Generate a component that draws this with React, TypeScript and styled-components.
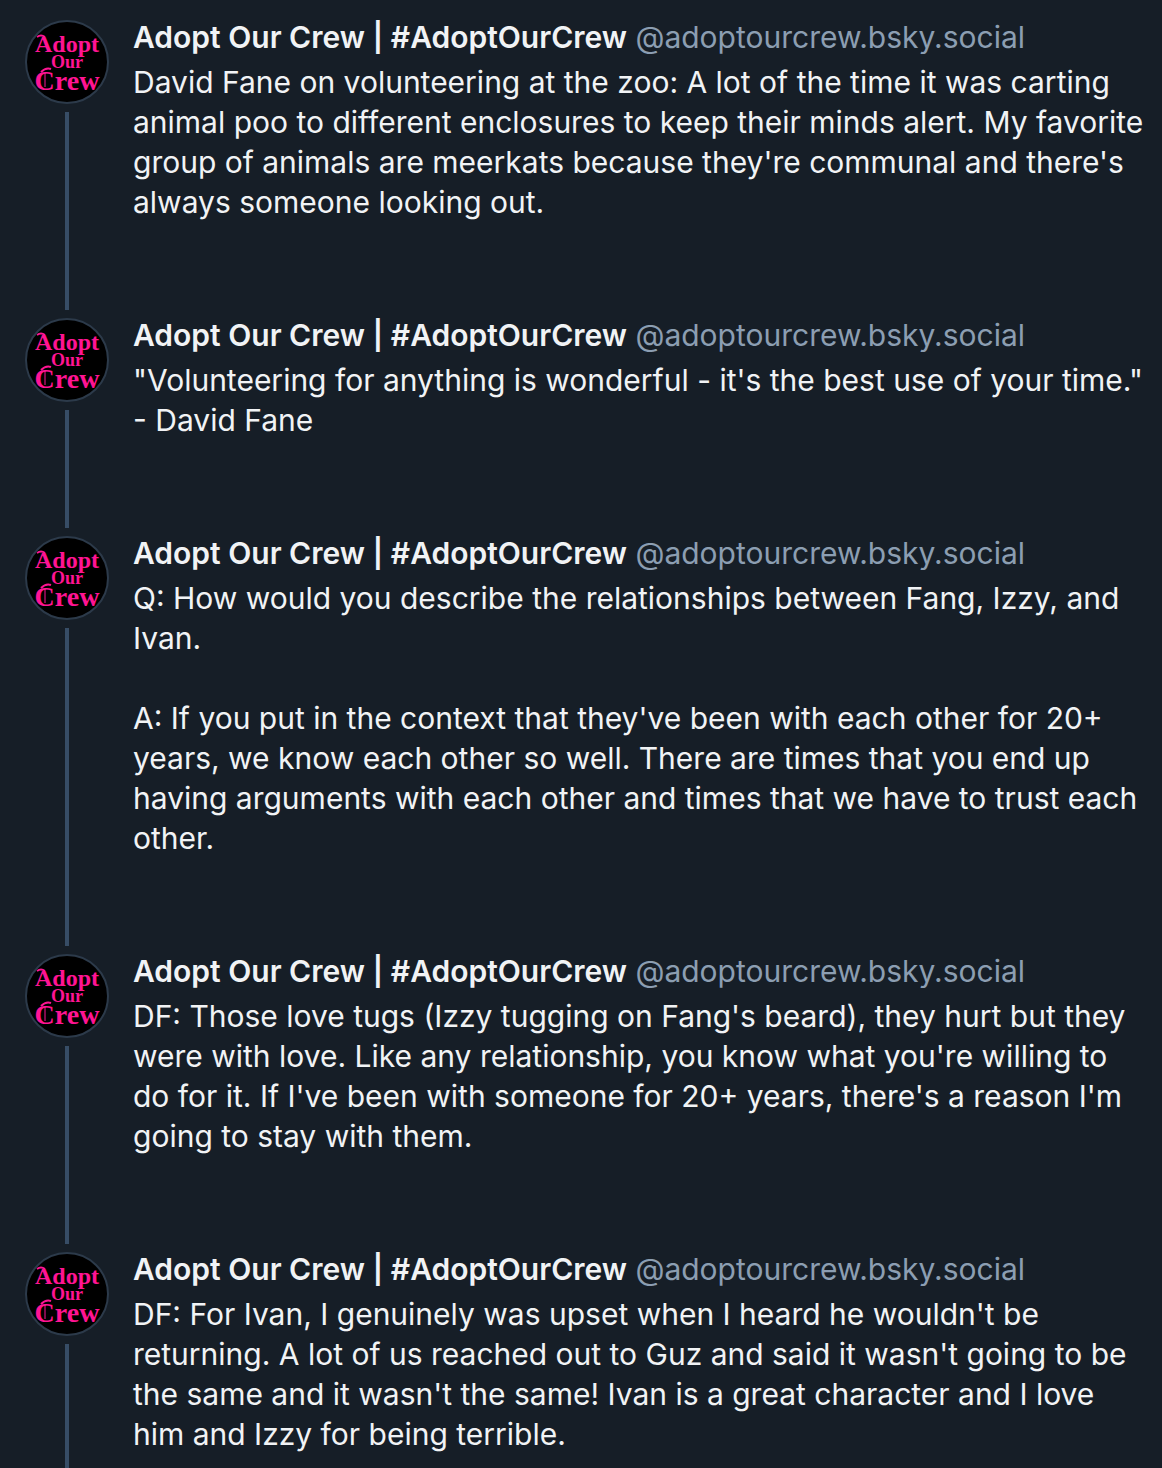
import styled, { createGlobalStyle } from "styled-components";

const GlobalStyle = createGlobalStyle`
  *, *::before, *::after { box-sizing: border-box; }
  body {
    margin: 0;
    background: #161e27;
    color: #f1f3f5;
    font-family: Inter, "Liberation Sans", sans-serif;
    font-size: 30px;
  }
`;

const Thread = styled.main`
  display: flex;
  flex-direction: column;
  min-height: 100vh;
  padding: 20px 16px 0 25px;
`;

const Post = styled.article`
  display: flex;
  gap: 24px;
  &:last-child { flex: 1; }
`;

const Rail = styled.div`
  display: flex;
  flex-direction: column;
  align-items: center;
  gap: 8px;
  flex: none;
  padding-bottom: 8px;
  ${Post}:last-child & { padding-bottom: 0; }
`;

const AvatarLink = styled.a`
  display: block;
  width: 84px;
  height: 84px;
  border: 2px solid #2c3a4a;
  border-radius: 50%;
  background: #000;
  overflow: hidden;
  svg { display: block; }
`;

const Connector = styled.div`
  flex: 1;
  width: 4px;
  background: #374d66;
`;

const Content = styled.div`
  flex: 1;
  min-width: 0;
  padding-bottom: 96px;
  ${Post}:last-child & { padding-bottom: 12px; }
`;

const Byline = styled.header`
  line-height: 34px;
  margin-bottom: 8px;
  white-space: nowrap;
  overflow: hidden;
  text-overflow: ellipsis;
`;

const Name = styled.a`
  color: inherit;
  font-weight: 600;
  text-decoration: none;
`;

const Handle = styled.a`
  color: #8c9eb2;
  text-decoration: none;
`;

const Body = styled.p`
  margin: 0;
  line-height: 40px;
  white-space: pre-wrap;
`;

const LogoText = styled.text`
  fill: #ff1493;
  font-family: "Liberation Serif", serif;
  font-weight: 700;
  text-anchor: middle;
`;

function CrewLogo() {
  return (
    <svg width="80" height="80" viewBox="0 0 80 80" aria-hidden="true">
      <LogoText x="40" y="30" fontSize="24">Adopt</LogoText>
      <LogoText x="40" y="46" fontSize="18">Our</LogoText>
      <LogoText x="40" y="68" fontSize="28">Crew</LogoText>
      {/* blackletter spurs on the capitals */}
      <g fill="none" stroke="#ff1493">
        <path d="M10 15q4-3 8 0" strokeWidth="2" />
        <path d="M14 50q5-5 10-3" strokeWidth="2" />
        <path d="M18 51v14" strokeWidth="1" />
      </g>
    </svg>
  );
}

const posts = [
  "David Fane on volunteering at the zoo: A lot of the time it was carting animal poo to different enclosures to keep their minds alert. My favorite group of animals are meerkats because they're communal and there's always someone looking out.",
  "\"Volunteering for anything is wonderful - it's the best use of your time.\" - David Fane",
  "Q: How would you describe the relationships between Fang, Izzy, and Ivan.\n\nA: If you put in the context that they've been with each other for 20+ years, we know each other so well. There are times that you end up having arguments with each other and times that we have to trust each other.",
  "DF: Those love tugs (Izzy tugging on Fang's beard), they hurt but they were with love. Like any relationship, you know what you're willing to do for it. If I've been with someone for 20+ years, there's a reason I'm going to stay with them.",
  "DF: For Ivan, I genuinely was upset when I heard he wouldn't be returning. A lot of us reached out to Guz and said it wasn't going to be the same and it wasn't the same! Ivan is a great character and I love him and Izzy for being terrible.",
];

export default function App() {
  return (
    <>
      <GlobalStyle />
      <Thread>
        {posts.map((text) => (
          <Post key={text}>
            <Rail>
              <AvatarLink href="#profile" aria-label="Adopt Our Crew profile">
                <CrewLogo />
              </AvatarLink>
              <Connector />
            </Rail>
            <Content>
              <Byline>
                <Name href="#profile">Adopt Our Crew | #AdoptOurCrew</Name>{" "}
                <Handle href="#profile">@adoptourcrew.bsky.social</Handle>
              </Byline>
              <Body>{text}</Body>
            </Content>
          </Post>
        ))}
      </Thread>
    </>
  );
}
